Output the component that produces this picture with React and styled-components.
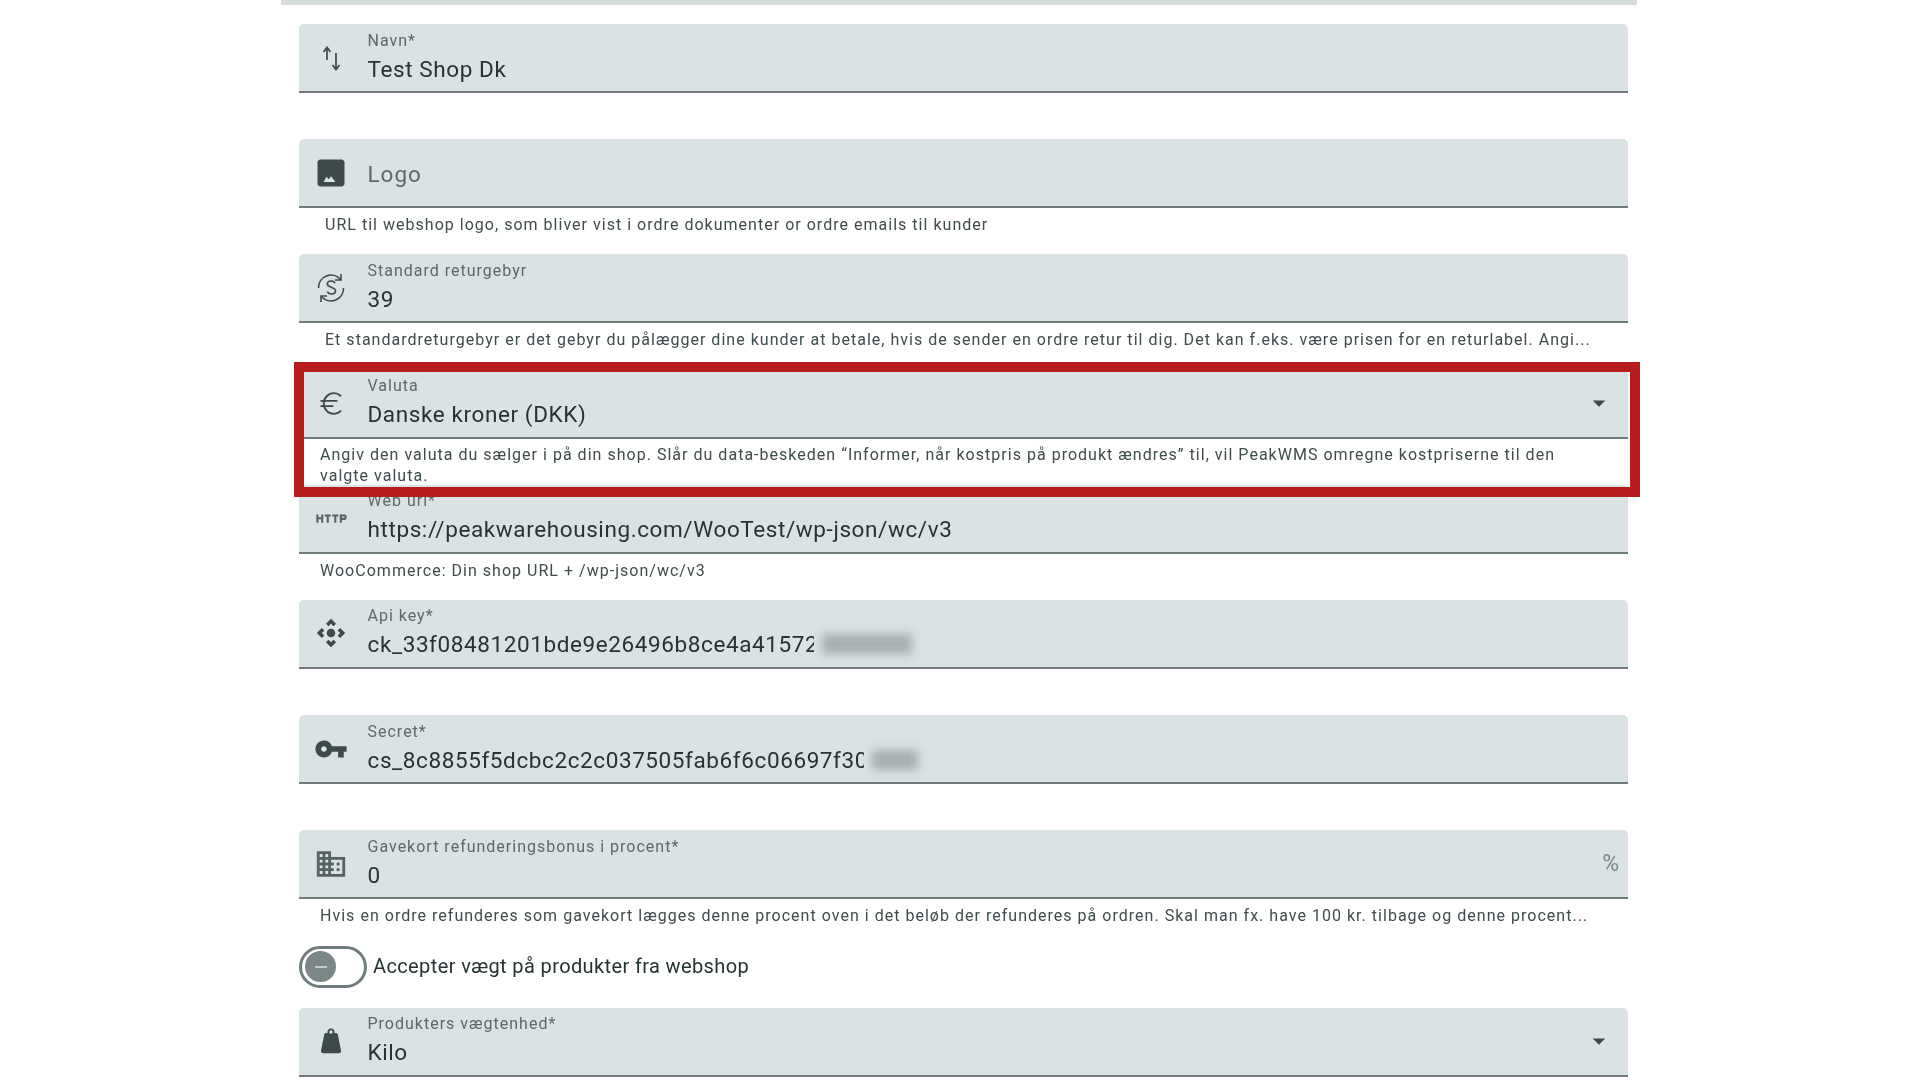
import { Euro } from "lucide-react";
import {
  MdArrowDropDown,
  MdControlCamera,
  MdDomain,
  MdHttp,
  MdVpnKey,
} from "react-icons/md";
import styled, { createGlobalStyle } from "styled-components";

const GlobalStyle = createGlobalStyle`
  html, body {
    margin: 0;
    height: 100%;
    background: #fff;
    overflow: hidden;
  }
  body {
    font-family: Roboto, "Liberation Sans", sans-serif;
  }
`;

const Page = styled.div`
  width: 1356px;
  margin-left: 281px;
  filter: blur(0.65px);
`;

const TopBar = styled.div`
  height: 5px;
  background: #d6dedd;
  margin-bottom: 19px;
`;

const Form = styled.div`
  display: flex;
  flex-direction: column;
  width: 1329px;
  margin-left: 18px;
`;

const Block = styled.div`
  position: relative;
  height: 115.2px;
`;

const Field = styled.div`
  display: flex;
  align-items: center;
  height: 69.12px;
  box-sizing: border-box;
  padding: 0 18px 0 14px;
  background: #dae2e3;
  border-bottom: 2px solid #6f7b7c;
  border-radius: 5px 5px 0 0;
`;

const IconSlot = styled.div`
  flex: none;
  display: flex;
  align-items: center;
  justify-content: center;
  width: 36px;
  height: 36px;
  margin-right: 18.5px;
  color: #3d494a;
`;

const Texts = styled.div`
  flex: 1;
  min-width: 0;
`;

const Label = styled.div`
  font-size: 16px;
  line-height: 18px;
  letter-spacing: 1px;
  color: #5c6869;
  margin-top: -3px;
`;

const Value = styled.div`
  display: flex;
  align-items: center;
  height: 24px;
  margin-top: 7px;
  font-size: 22.5px;
  letter-spacing: 0.6px;
  color: #263233;
  white-space: nowrap;
`;

const Placeholder = styled.div`
  font-size: 22.5px;
  letter-spacing: 1px;
  color: #5c6869;
  margin-top: 2px;
`;

const Redacted = styled.span`
  flex: none;
  position: relative;
  width: ${(p) => p.$width}px;
  height: 34px;
  margin-left: -4px;
  background: #dae2e3;
  &::after {
    content: "";
    position: absolute;
    left: 8px;
    right: 6px;
    top: 7px;
    bottom: 7px;
    background: #a6afaf;
    filter: blur(5px);
  }
`;

const Suffix = styled.span`
  font-size: 23px;
  color: #7a8687;
  margin-right: -9px;
`;

const Arrow = styled.div`
  display: flex;
  color: #3d494a;
  margin-right: -4px;
`;

const Help = styled.div`
  box-sizing: border-box;
  padding: ${(p) => (p.$wrap ? 5 : 6)}px 30px 0 ${(p) => (p.$wide ? 26 : 21)}px;
  font-size: 16px;
  line-height: 21px;
  letter-spacing: 1.02px;
  color: #3f4b4c;
  white-space: ${(p) => (p.$wrap ? "normal" : "nowrap")};
`;

const Highlight = styled.div`
  position: absolute;
  left: -5px;
  right: -12px;
  top: -8px;
  height: 135px;
  box-sizing: border-box;
  border: 10px solid #b71c1c;
  z-index: 2;
  pointer-events: none;
`;

const ToggleRow = styled.div`
  display: flex;
  align-items: center;
  gap: 6px;
  height: 42px;
  margin-bottom: 20px;
`;

const Track = styled.div`
  display: flex;
  align-items: center;
  width: 68px;
  height: 42px;
  box-sizing: border-box;
  padding-left: 3px;
  border: 3px solid #6f7b7c;
  border-radius: 21px;
  background: #fff;
`;

const Knob = styled.div`
  display: flex;
  align-items: center;
  justify-content: center;
  width: 31px;
  height: 31px;
  border-radius: 50%;
  background: #7b8687;
  &::before {
    content: "";
    width: 12px;
    height: 2px;
    background: #c4cdce;
  }
`;

const ToggleLabel = styled.span`
  font-size: 20px;
  letter-spacing: 0.38px;
  color: #263233;
  margin-top: -2px;
`;

function SwapIcon() {
  return (
    <svg width="30" height="30" viewBox="0 0 30 30" fill="none" stroke="currentColor" strokeWidth="1.7">
      <path d="M11 5v12M7.500 9L11 4.500 14.500 9" />
      <path d="M20 10v16M16.500 22l3.500 4.500 3.500-4.500" />
    </svg>
  );
}

function ImageIcon() {
  return (
    <svg width="36" height="36" viewBox="0 0 24 24" fill="currentColor">
      <path
        fillRule="evenodd"
        d="M21 19V5c0-1.100-.9-2-2-2H5c-1.100 0-2 .9-2 2v14c0 1.100.9 2 2 2h14c1.100 0 2-.9 2-2zM9 14.500l1.500 1.600 1.500-2 3 3.900H7l2-3.500z"
      />
    </svg>
  );
}

function ReturnFeeIcon() {
  return (
    <svg width="34" height="34" viewBox="0 0 34 34" fill="none" stroke="currentColor" strokeWidth="1.6">
      <path d="M4.500 17A12.500 12.500 0 0 1 26.500 8.500" />
      <path d="M29.500 17A12.500 12.500 0 0 1 7.500 25.500" />
      <path d="M27 3v6h-6M7 31v-6h6" />
      <path d="M21 12c-.8-1.300-2.300-2-3.800-2-2.300 0-3.900 1.300-3.900 3 0 3.800 8.200 2.500 8.200 6.800 0 1.900-1.700 3.200-4 3.200-1.800 0-3.300-.8-4.300-2.200" />
    </svg>
  );
}

function WeightIcon() {
  return (
    <svg width="34" height="34" viewBox="0 0 34 34" fill="currentColor">
      <path
        fillRule="evenodd"
        d="M17 4.500a3.600 3.600 0 0 1 3.500 4.400l1.500.1c.9 0 1.600.6 1.800 1.500L27 26.500c.3 1.400-.7 2.800-2.200 2.800H9.200c-1.500 0-2.500-1.400-2.200-2.800l3.200-16c.2-.9.9-1.500 1.800-1.500l1.500-.1A3.600 3.600 0 0 1 17 4.500zm0 1.800a1.700 1.700 0 1 0 0 3.400 1.700 1.700 0 0 0 0-3.400z"
      />
    </svg>
  );
}

const fields = [
  { icon: <SwapIcon />, label: "Navn*", value: "Test Shop Dk" },
  {
    icon: <ImageIcon />,
    placeholder: "Logo",
    help: "URL til webshop logo, som bliver vist i ordre dokumenter or ordre emails til kunder",
    wide: true,
  },
  {
    icon: <ReturnFeeIcon />,
    label: "Standard returgebyr",
    value: "39",
    help: "Et standardreturgebyr er det gebyr du pålægger dine kunder at betale, hvis de sender en ordre retur til dig. Det kan f.eks. være prisen for en returlabel. Angi...",
    wide: true,
  },
  {
    icon: <Euro size={31} strokeWidth={1.4} />,
    label: "Valuta",
    value: "Danske kroner (DKK)",
    select: true,
    highlight: true,
    wrap: true,
    help: "Angiv den valuta du sælger i på din shop. Slår du data-beskeden “Informer, når kostpris på produkt ændres” til, vil PeakWMS omregne kostpriserne til den valgte valuta.",
  },
  {
    icon: <MdHttp size={33} color="#566263" />,
    label: "Web url*",
    value: "https://peakwarehousing.com/WooTest/wp-json/wc/v3",
    help: "WooCommerce: Din shop URL + /wp-json/wc/v3",
  },
  {
    icon: <MdControlCamera size={34} />,
    label: "Api key*",
    value: "ck_33f08481201bde9e26496b8ce4a41572",
    redacted: 104,
  },
  {
    icon: <MdVpnKey size={34} />,
    label: "Secret*",
    value: "cs_8c8855f5dcbc2c2c037505fab6f6c06697f30",
    redacted: 60,
  },
  {
    icon: <MdDomain size={34} color="#566263" />,
    label: "Gavekort refunderingsbonus i procent*",
    value: "0",
    suffix: "%",
    help: "Hvis en ordre refunderes som gavekort lægges denne procent oven i det beløb der refunderes på ordren. Skal man fx. have 100 kr. tilbage og denne procent...",
  },
];

function FormField({ icon, label, value, placeholder, select, suffix, redacted }) {
  return (
    <Field>
      <IconSlot>{icon}</IconSlot>
      <Texts>
        {placeholder ? (
          <Placeholder>{placeholder}</Placeholder>
        ) : (
          <>
            <Label>{label}</Label>
            <Value>
              {value}
              {redacted && <Redacted $width={redacted} />}
            </Value>
          </>
        )}
      </Texts>
      {suffix && <Suffix>{suffix}</Suffix>}
      {select && (
        <Arrow>
          <MdArrowDropDown size={30} />
        </Arrow>
      )}
    </Field>
  );
}

export default function App() {
  return (
    <>
      <GlobalStyle />
      <Page>
        <TopBar />
        <Form>
          {fields.map((f) => (
            <Block key={f.label || f.placeholder}>
              <FormField {...f} />
              {f.help && (
                <Help $wide={f.wide} $wrap={f.wrap}>
                  {f.help}
                </Help>
              )}
              {f.highlight && <Highlight />}
            </Block>
          ))}
          <ToggleRow>
            <Track>
              <Knob />
            </Track>
            <ToggleLabel>Accepter vægt på produkter fra webshop</ToggleLabel>
          </ToggleRow>
          <FormField
            icon={<WeightIcon />}
            label="Produkters vægtenhed*"
            value="Kilo"
            select
          />
        </Form>
      </Page>
    </>
  );
}
